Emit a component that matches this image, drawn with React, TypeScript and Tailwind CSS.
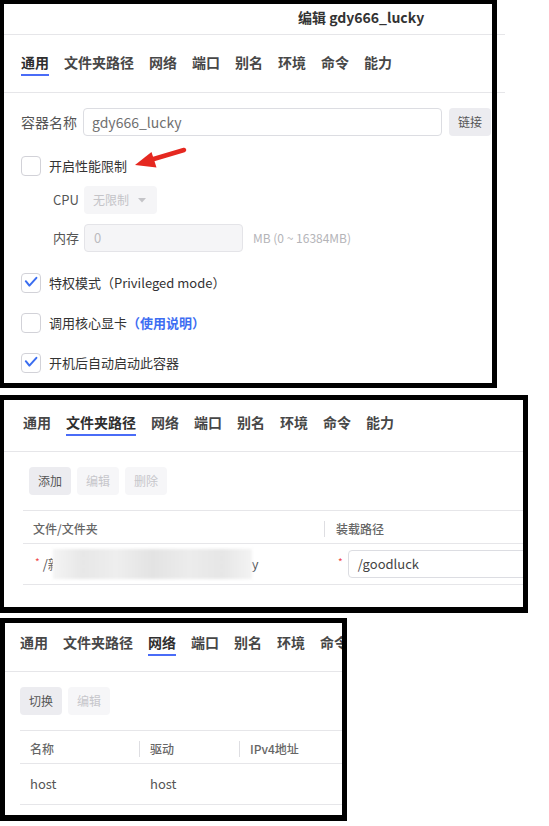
import React from "react";

const TABS = ["通用", "文件夹路径", "网络", "端口", "别名", "环境", "命令", "能力"];

function Tabs({ active }: { active: number }) {
  return (
    <div className="flex gap-[15px] whitespace-nowrap">
      {TABS.map((t, i) => (
        <div key={t} className="flex flex-col shrink-0">
          <span
            className={
              i === active
                ? "text-[14px] leading-[20px] font-semibold text-[#2e2e2e]"
                : "text-[14px] leading-[20px] font-semibold text-[#474747]"
            }
          >
            {t}
          </span>
          <div className={i === active ? "mt-[2px] h-[2px] bg-[#4a6cf7]" : "mt-[2px] h-[2px] bg-transparent"} />
        </div>
      ))}
    </div>
  );
}

function Box({ checked }: { checked?: boolean }) {
  return (
    <div className="w-[20px] h-[20px] rounded-[4px] border border-[#d2d2d8] bg-white shrink-0 flex items-center justify-center">
      {checked && (
        <svg width="18" height="18" viewBox="1 1 18 18">
          <path d="M4.8 8.2 L8.4 12.6 L15.4 4.8" fill="none" stroke="#3b6ef0" strokeWidth="2" strokeLinecap="round" strokeLinejoin="round" />
        </svg>
      )}
    </div>
  );
}

function Btn({ label, on }: { label: string; on?: boolean }) {
  return (
    <div
      className={
        on
          ? "w-[42px] h-[28px] rounded-[4px] bg-[#ececf0] text-[#555] text-[12px] flex items-center justify-center"
          : "w-[42px] h-[28px] rounded-[4px] bg-[#f6f6f8] text-[#c6c6cb] text-[12px] flex items-center justify-center"
      }
    >
      {label}
    </div>
  );
}

export default function App() {
  return (
    <div
      className="w-[549px] h-[826px] bg-white overflow-hidden"
      style={{ fontFamily: '"Noto Sans CJK SC", "Noto Sans", sans-serif' }}
    >
      {/* Panel 1 */}
      <div className="relative w-[505px] h-[388px] overflow-hidden">
        <div className="pt-[4px] pl-[4px]">
          <div className="w-[501px] h-[31px] border-b border-[#e6e6e9] flex items-center pl-[294px] pb-[3px]">
            <span className="text-[14px] font-semibold text-[#333]">编辑 gdy666_lucky</span>
          </div>
          <div className="w-[501px] border-b border-[#e6e6e9] pl-[17px] pt-[17px] pb-[16px]">
            <Tabs active={0} />
          </div>
          <div className="pl-[17px]">
            <div className="mt-[15px] h-[28px] flex items-center">
              <span className="w-[56px] text-[14px] text-[#555] shrink-0">容器名称</span>
              <div className="ml-[6px] w-[359px] h-[28px] border border-[#dcdde2] rounded-[4px] pl-[8px] flex items-center text-[14px] text-[#707070]">
                gdy666_lucky
              </div>
              <div className="ml-[7px] w-[42px] h-[28px] rounded-[4px] bg-[#ececf0] text-[12px] text-[#555] flex items-center justify-center">
                链接
              </div>
            </div>
            <div className="mt-[20px] h-[20px] flex items-center gap-[8px]">
              <Box />
              <span className="text-[13px] text-[#333]">开启性能限制</span>
            </div>
            <div className="mt-[10px] h-[28px] flex items-center pl-[32px]">
              <span className="w-[26px] text-[13px] text-[#555]">CPU</span>
              <div className="ml-[5px] w-[73px] h-[28px] rounded-[4px] bg-[#f5f5f7] flex items-center pl-[9px] pr-[11px] text-[12px] text-[#c4c4c8]">
                <span>无限制</span>
                <svg className="ml-auto" width="8" height="5" viewBox="0 0 8 5">
                  <path d="M0 0 L8 0 L4 4.5 Z" fill="#c4c4c8" />
                </svg>
              </div>
            </div>
            <div className="mt-[10px] h-[28px] flex items-center pl-[32px]">
              <span className="w-[26px] text-[13px] text-[#555]">内存</span>
              <div className="ml-[5px] w-[159px] h-[28px] rounded-[4px] bg-[#f5f5f7] border border-[#e4e4e8] flex items-center pl-[9px] text-[13px] text-[#bbbbbf]">
                0
              </div>
              <span className="ml-[10px] text-[12px] text-[#b4b4b8]">MB (0 ~ 16384MB)</span>
            </div>
            <div className="mt-[21px] h-[20px] flex items-center gap-[8px]">
              <Box checked />
              <span className="text-[13px] text-[#333]">特权模式（Privileged mode）</span>
            </div>
            <div className="mt-[20px] h-[20px] flex items-center gap-[8px]">
              <Box />
              <span className="text-[13px] text-[#333]">
                调用核心显卡<span className="text-[#3d6df2] font-semibold">（使用说明）</span>
              </span>
            </div>
            <div className="mt-[20px] h-[20px] flex items-center gap-[8px]">
              <Box checked />
              <span className="text-[13px] text-[#333]">开机后自动启动此容器</span>
            </div>
          </div>
        </div>
        <svg className="absolute left-[128px] top-[142px]" width="62" height="30" viewBox="0 0 62 30">
          <line x1="24" y1="17.5" x2="56" y2="8" stroke="#e52820" strokeWidth="4.5" strokeLinecap="round" />
          <polygon points="7,23 23.5,10 28.5,25.5" fill="#e52820" />
        </svg>
        <div className="absolute left-0 top-0 w-[497px] h-[388px] border-t-4 border-l-4 border-r-[5px] border-b-[5px] border-black pointer-events-none" />
      </div>

      {/* Panel 2 */}
      <div className="relative mt-[7px] w-[528px] h-[218px] overflow-hidden">
        <div className="pt-[5px] pl-[4px]">
          <div className="w-[524px] border-b border-[#e6e6e9] pl-[19px] pt-[12px] pb-[15px]">
            <Tabs active={1} />
          </div>
          <div className="mt-[15px] pl-[25px] flex gap-[6px]">
            <Btn label="添加" on />
            <Btn label="编辑" />
            <Btn label="删除" />
          </div>
          <div className="mt-[15px] ml-[19px] w-[510px] border-t border-[#e6e6e9]">
            <div className="h-[33px] border-b border-[#e6e6e9] flex items-center pt-[4px] text-[12px] text-[#666] font-medium">
              <div className="w-[301px] shrink-0 pl-[10px]">文件/文件夹</div>
              <div className="flex items-center">
                <div className="w-px h-[16px] bg-[#dedee2]" />
                <span className="pl-[11px]">装载路径</span>
              </div>
            </div>
            <div className="h-[41px] border-b border-[#e6e6e9] flex items-center text-[12px]">
              <div className="w-[301px] shrink-0 pl-[12px] flex items-center">
                <span className="text-[#f04848] text-[10px] -mt-[5px]">*</span>
                <span className="ml-[3px] text-[#555] text-[13px]">/</span>
                <span className="w-[5px] overflow-hidden text-[#555] text-[13px]">新</span>
                <div className="w-[199px] h-[30px] blur-[1.5px] bg-[linear-gradient(90deg,#f4f4f4,#e7e7e7_15%,#eeeeee_32%,#e3e3e3_50%,#ececec_68%,#e6e6e6_85%,#f3f3f3)]" />
                <span className="text-[#555] text-[13px]">y</span>
              </div>
              <div className="shrink-0 pl-[14px] flex items-center">
                <span className="text-[#f04848] text-[10px] -mt-[5px]">*</span>
                <div className="ml-[5px] w-[200px] h-[28px] border border-[#dcdde2] rounded-[4px] pl-[9px] flex items-center text-[13px] text-[#444]">
                  /goodluck
                </div>
              </div>
            </div>
          </div>
        </div>
        <div className="absolute inset-0 border-t-[5px] border-l-4 border-r-[5px] border-b-[6px] border-black pointer-events-none" />
      </div>

      {/* Panel 3 */}
      <div className="relative mt-[5px] w-[347px] h-[203px] overflow-hidden">
        <div className="pt-[5px] pl-[5px]">
          <div className="w-[342px] border-b border-[#e6e6e9] pl-[15px] pt-[9px] pb-[15px] overflow-hidden">
            <Tabs active={2} />
          </div>
          <div className="mt-[15px] pl-[15px] flex gap-[6px]">
            <Btn label="切换" on />
            <Btn label="编辑" />
          </div>
          <div className="mt-[15px] ml-[15px] w-[330px] border-t border-[#e6e6e9]">
            <div className="h-[33px] border-b border-[#e6e6e9] flex items-center pt-[4px] text-[12px] text-[#666] font-medium">
              <div className="w-[119px] shrink-0 pl-[10px]">名称</div>
              <div className="w-[100px] shrink-0 flex items-center">
                <div className="w-px h-[16px] bg-[#dedee2]" />
                <span className="pl-[10px]">驱动</span>
              </div>
              <div className="flex items-center">
                <div className="w-px h-[16px] bg-[#dedee2]" />
                <span className="pl-[10px]">IPv4地址</span>
              </div>
            </div>
            <div className="h-[41px] border-b border-[#e6e6e9] flex items-center text-[13px] text-[#555]">
              <div className="w-[119px] shrink-0 pl-[10px]">host</div>
              <div className="pl-[11px]">host</div>
            </div>
          </div>
        </div>
        <div className="absolute inset-0 border-[5px] border-b-[6px] border-black pointer-events-none" />
      </div>
    </div>
  );
}
